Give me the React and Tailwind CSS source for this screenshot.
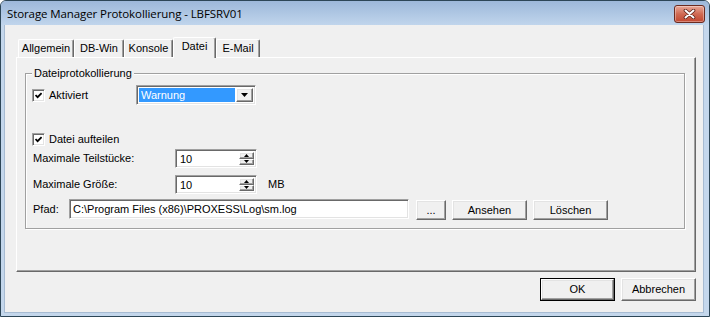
import React from 'react';

// classic 3D borders
const raised =
  'border border-t-white border-l-white border-r-[#696969] border-b-[#696969] shadow-[inset_-1px_-1px_0_#a0a0a0,inset_1px_1px_0_#e3e3e3]';
const sunken =
  'border border-t-[#a0a0a0] border-l-[#a0a0a0] border-r-white border-b-white shadow-[inset_1px_1px_0_#696969,inset_-1px_-1px_0_#e3e3e3]';

const Check = () => (
  <span className={`w-[13px] h-[13px] shrink-0 bg-white flex items-center justify-center ${sunken}`}>
    <svg width="7" height="7" viewBox="0 0 7 7">
      <polyline points="0.5,3 2.6,5.2 6.6,1" fill="none" stroke="#000" strokeWidth="1.8" />
    </svg>
  </span>
);

const Tab = ({ label, className, active }) => (
  <div
    className={`${className} ${
      active ? 'h-[21px] -mb-px relative z-10 pb-[4px]' : 'h-[18px] pb-[1px]'
    } bg-[#f0f0f0] border-t border-l border-r border-t-white border-l-white border-r-[#696969] rounded-t-[2px] shadow-[inset_-1px_0_0_#a0a0a0] flex items-center justify-center`}
  >
    {label}
  </div>
);

const Spin = ({ value }) => (
  <div className={`w-[82px] h-[19px] bg-white flex p-[2px] ${sunken}`}>
    <span className="flex-1 pl-[2px] leading-[15px]">{value}</span>
    <div className="w-[15px] flex flex-col">
      <div className={`flex-1 bg-[#f0f0f0] flex items-center justify-center ${raised}`}>
        <svg width="5" height="3" viewBox="0 0 5 3">
          <polygon points="0,3 5,3 2.5,0" fill="#000" />
        </svg>
      </div>
      <div className={`flex-1 bg-[#f0f0f0] flex items-center justify-center ${raised}`}>
        <svg width="5" height="3" viewBox="0 0 5 3">
          <polygon points="0,0 5,0 2.5,3" fill="#000" />
        </svg>
      </div>
    </div>
  </div>
);

const Btn = ({ children, className }) => (
  <div className={`${className} bg-[#f0f0f0] flex items-center justify-center ${raised}`}>{children}</div>
);

export default function App() {
  return (
    <div className="w-[710px] h-[317px] flex flex-col border border-[#2d4657] rounded-t-[6px] overflow-hidden bg-[#c4d7ec] text-[11px] text-black font-['Liberation_Sans',Arial,sans-serif]">
      {/* title bar */}
      <div className="h-[24px] shrink-0 flex items-start justify-between pl-[6px] pr-[4px] bg-gradient-to-b from-[#9db8da] to-[#c0d5ec]">
        <span className="mt-[5px] text-[11.5px] leading-[16px] font-['Open_Sans','Liberation_Sans',sans-serif] tracking-[-0.1px]">
          Storage Manager Protokollierung - LBFSRV01
        </span>
        <div className="mt-[4px] w-[31px] h-[18px] rounded-[3px] border border-[#6b2b20] bg-gradient-to-b from-[#e9a898] via-[#cf6a53] to-[#c2462f] shadow-[inset_0_0_0_1px_rgba(255,255,255,0.35)] flex items-center justify-center">
          <svg width="13" height="10" viewBox="0 0 13 10">
            <path d="M2.5 1.5 L10.5 8.5 M10.5 1.5 L2.5 8.5" stroke="#5a2218" strokeWidth="3.6" strokeLinecap="round" />
            <path d="M2.5 1.5 L10.5 8.5 M10.5 1.5 L2.5 8.5" stroke="#fff" strokeWidth="2" strokeLinecap="round" />
          </svg>
        </div>
      </div>

      {/* client */}
      <div className="flex-1 ml-[3px] mr-[5px] mb-[3px] bg-[#f0f0f0] border-l border-b border-r border-[#a7bbd2] flex flex-col">
        <div className="mt-[12px] ml-[13px] h-[20px] flex items-end">
          <Tab label="Allgemein" className="w-[56px]" />
          <Tab label="DB-Win" className="w-[50px]" />
          <Tab label="Konsole" className="w-[49px]" />
          <Tab label="Datei" className="w-[43px]" active />
          <Tab label="E-Mail" className="w-[44px]" />
        </div>

        {/* tab page */}
        <div className="ml-[11px] w-[680px] h-[215px] border border-t-white border-l-white border-r-[#696969] border-b-[#696969] shadow-[inset_-1px_-1px_0_#a0a0a0]">
          <div className="ml-[8px] mt-[15px] w-[660px] h-[156px] border border-[#a0a0a0] shadow-[inset_1px_1px_0_#fff,1px_1px_0_#fff]">
            <div className="-mt-[7px] ml-[6px] px-[2px] w-fit h-[13px] leading-[13px] bg-[#f0f0f0]">
              Dateiprotokollierung
            </div>

            <div className="mt-[5px] h-[20px] pl-[6px] flex items-center">
              <div className="w-[104px] flex items-center gap-[4px]">
                <Check />
                <span>Aktiviert</span>
              </div>
              <div className={`w-[120px] h-[20px] bg-white flex p-[2px] ${sunken}`}>
                <span className="flex-1 mr-[1px] bg-[#3399ff] text-white pl-[2px] leading-[14px]">Warnung</span>
                <div className={`w-[17px] bg-[#f0f0f0] flex items-center justify-center ${raised}`}>
                  <svg width="7" height="4" viewBox="0 0 7 4">
                    <polygon points="0,0 7,0 3.5,4" fill="#000" />
                  </svg>
                </div>
              </div>
            </div>

            <div className="mt-[28px] h-[13px] pl-[6px] flex items-center gap-[4px]">
              <Check />
              <span>Datei aufteilen</span>
            </div>

            <div className="mt-[3px] h-[19px] pl-[7px] flex items-center">
              <span className="w-[142px]">Maximale Teilstücke:</span>
              <Spin value="10" />
            </div>

            <div className="mt-[7px] h-[19px] pl-[7px] flex items-center">
              <span className="w-[142px]">Maximale Größe:</span>
              <Spin value="10" />
              <span className="ml-[11px]">MB</span>
            </div>

            <div className="mt-[5px] h-[21px] pl-[7px] flex items-start">
              <span className="w-[36px] leading-[20px]">Pfad:</span>
              <div className={`w-[340px] h-[20px] bg-white pl-[3px] leading-[18px] ${sunken}`}>
                C:\Program Files (x86)\PROXESS\Log\sm.log
              </div>
              <Btn className="ml-[7px] mt-[1px] w-[30px] h-[20px]">...</Btn>
              <Btn className="ml-[6px] mt-[1px] w-[75px] h-[20px]">Ansehen</Btn>
              <Btn className="ml-[6px] mt-[1px] w-[75px] h-[20px]">Löschen</Btn>
            </div>
          </div>
        </div>

        {/* dialog buttons */}
        <div className="mt-[6px] pr-[7px] flex justify-end gap-[6px]">
          <div className="w-[75px] h-[23px] border border-black">
            <Btn className="w-full h-full">OK</Btn>
          </div>
          <Btn className="w-[75px] h-[23px]">Abbrechen</Btn>
        </div>
      </div>
    </div>
  );
}
